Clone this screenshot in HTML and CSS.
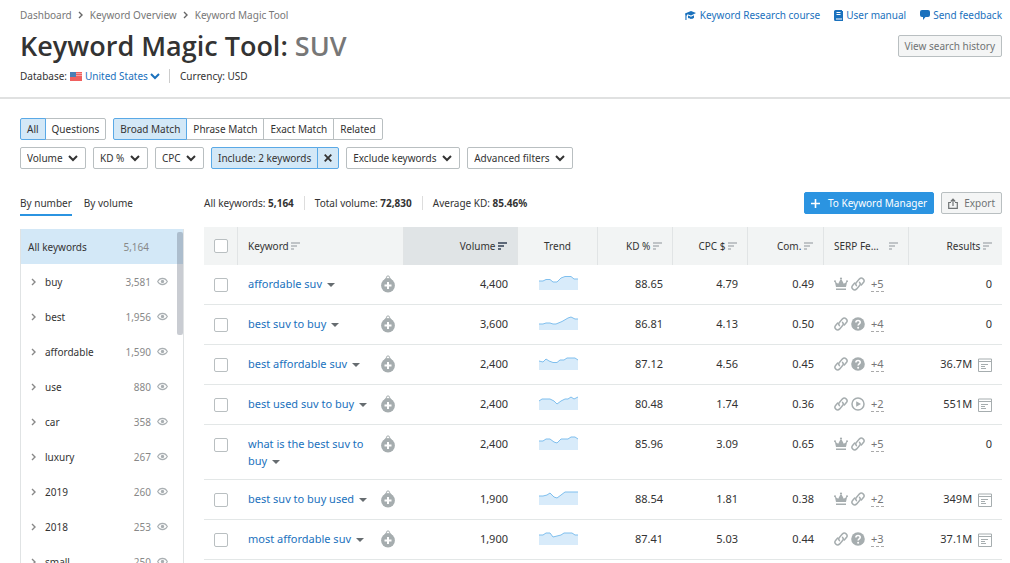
FILE: index.html
```html
<!DOCTYPE html>
<html lang="en">
<head>
    <meta charset="UTF-8">
    <meta name="viewport" content="width=device-width, initial-scale=1.0">
    <title>Keyword Magic Tool: SUV</title>
    <link rel="stylesheet" href="styles.css">
</head>
<body>
    <!-- Icons shared by the page -->
    <svg class="sprite" aria-hidden="true">
        <symbol id="sort" viewBox="0 0 9 8"><path d="M0 0h9v2H0zM0 3h6v2H0zM0 6h3v2H0z"/></symbol>
        <symbol id="chevron" viewBox="0 0 6 8"><path d="M1 1l3 3-3 3" fill="none" stroke="currentColor" stroke-width="1.4"/></symbol>
        <symbol id="eye" viewBox="0 0 10 8"><path d="M.6 4C2.6.2 7.4.2 9.4 4 7.4 7.8 2.6 7.8.6 4z" fill="none" stroke="currentColor"/><circle cx="5" cy="4" r="1.5"/></symbol>
        <symbol id="add" viewBox="0 0 14 18"><circle cx="7" cy="10.5" r="6.9"/><path d="M1.8 6.5L5 2.500h4l3.200 4z"/><circle cx="7" cy="2.400" r="1.500" fill="#fff" stroke="currentColor"/><path d="M7 7v7M3.500 10.500h7" stroke="#fff" stroke-width="2"/></symbol>
        <symbol id="crown" viewBox="0 0 14 14"><path d="M2 10L.8 4.500l3.400 2.200L6.400 2.500h1.200l2.200 4.200 3.400-2.200L12 10zM2 11.500h10V13H2z"/><circle cx="7" cy="1.500" r="1.100"/><circle cx="1" cy="4.300" r="1"/><circle cx="13" cy="4.300" r="1"/></symbol>
        <symbol id="link" viewBox="0 0 14 14"><g fill="none" stroke="currentColor" stroke-width="1.500" stroke-linecap="round"><path d="M5.400 8.600c-1-1.200-.8-2.300 0-3.200l2.900-3.300c2.500-2.500 6.300.6 4.100 3.500L10.300 8"/><path d="M8.600 5.400c1 1.200.8 2.300 0 3.200l-2.900 3.300c-2.500 2.500-6.300-.6-4.100-3.500L3.700 6"/></g></symbol>
        <symbol id="question" viewBox="0 0 14 14"><circle cx="7" cy="7" r="6.800"/><path d="M4.900 5.500c0-2.800 4.300-2.600 4.300-.2C9.200 6.900 7.100 6.800 7.100 8.600" fill="none" stroke="#fff" stroke-width="1.600"/><circle cx="7.100" cy="10.700" r="1" fill="#fff"/></symbol>
        <symbol id="play" viewBox="0 0 14 14"><circle cx="7" cy="7" r="6" fill="none" stroke="currentColor" stroke-width="1.500"/><path d="M5.200 4.200L10 7l-4.800 2.800z"/></symbol>
        <symbol id="serp" viewBox="0 0 14 14"><path d="M.5 1h13v12.500H.5zM.5 3.500h13M3 6.500h7M3 8.500h4M3 10.500h5" fill="none" stroke="currentColor"/></symbol>
    </svg>

    <header class="header">
        <div class="header-top">
            <nav class="breadcrumbs" aria-label="Breadcrumbs">
                <a href="#">Dashboard</a>
                <svg width="6" height="8"><use href="#chevron"/></svg>
                <a href="#">Keyword Overview</a>
                <svg width="6" height="8"><use href="#chevron"/></svg>
                <a href="#">Keyword Magic Tool</a>
            </nav>
            <nav class="help-links" aria-label="Help">
                <a href="#"><svg class="cap" width="11" height="10" viewBox="0 0 11 10"><path d="M0 3.500L6 1l5 2-5 2.500-3.500-1.300L1.500 6v4H.4V5.500z"/><path d="M3 5.500l3 1.200 3-1.500v2.500c-1.500 1.600-4.500 1.600-6 0z"/></svg>Keyword Research course</a>
                <a href="#"><svg width="9" height="11" viewBox="0 0 9 11"><path d="M1.500 0H8v8.500H2v1h6V1h1v10H1.500A1.500 1.500 0 0 1 0 9.500v-8A1.500 1.500 0 0 1 1.500 0z"/><path d="M2.500 2.500h4M2.500 4.500h4" stroke="#fff"/></svg>User manual</a>
                <a href="#"><svg width="10" height="10" viewBox="0 0 10 10"><path d="M2 0h6a2 2 0 0 1 2 2v3a2 2 0 0 1-2 2H5.500L3 10V7H2a2 2 0 0 1-2-2V2a2 2 0 0 1 2-2z"/></svg>Send feedback</a>
            </nav>
        </div>
        <div class="header-title">
            <h1>Keyword Magic Tool: <span>SUV</span></h1>
            <button type="button" class="btn">View search history</button>
        </div>
        <div class="header-info">
            <label for="database">Database:</label>
            <svg class="flag" width="12" height="9" viewBox="0 0 12 9"><path fill="#f0605f" d="M0 0h12v9H0z"/><path d="M6 1.500h6M6 3.500h6" stroke="#f7a3a0"/><path fill="#4b7fb5" d="M0 0h6v5H0z"/></svg>
            <select id="database" class="database">
                <option>United States</option>
            </select>
            <span class="currency">Currency: USD</span>
        </div>
    </header>

    <main class="main">
        <div class="filters">
            <div class="group">
                <button type="button" class="active">All</button>
                <button type="button">Questions</button>
            </div>
            <div class="group">
                <button type="button" class="active">Broad Match</button>
                <button type="button">Phrase Match</button>
                <button type="button">Exact Match</button>
                <button type="button">Related</button>
            </div>
        </div>
        <div class="filters">
            <select class="filter" aria-label="Volume"><option>Volume</option></select>
            <select class="filter" aria-label="Keyword difficulty"><option>KD %</option></select>
            <select class="filter" aria-label="CPC"><option>CPC</option></select>
            <div class="group">
                <button type="button" class="active">Include: 2 keywords</button>
                <button type="button" class="active clear" aria-label="Clear"><svg width="8" height="8" viewBox="0 0 8 8"><path d="M.7.7l6.600 6.600M7.300.7L.7 7.300" stroke="currentColor" stroke-width="1.800"/></svg></button>
            </div>
            <select class="filter" aria-label="Exclude keywords"><option>Exclude keywords</option></select>
            <select class="filter" aria-label="Advanced filters"><option>Advanced filters</option></select>
        </div>

        <div class="content">
            <!-- Keyword groups -->
            <aside class="sidebar">
                <div class="tabs">
                    <button type="button" class="selected">By number</button>
                    <button type="button">By volume</button>
                </div>
                <div class="groups">
                    <ul>
                        <li class="all"><span class="name">All keywords</span><span>5,164</span></li>
                        <li><svg width="6" height="8"><use href="#chevron"/></svg><span class="name">buy</span><span>3,581</span><svg class="eye" width="11" height="9"><use href="#eye"/></svg></li>
                        <li><svg width="6" height="8"><use href="#chevron"/></svg><span class="name">best</span><span>1,956</span><svg class="eye" width="11" height="9"><use href="#eye"/></svg></li>
                        <li><svg width="6" height="8"><use href="#chevron"/></svg><span class="name">affordable</span><span>1,590</span><svg class="eye" width="11" height="9"><use href="#eye"/></svg></li>
                        <li><svg width="6" height="8"><use href="#chevron"/></svg><span class="name">use</span><span>880</span><svg class="eye" width="11" height="9"><use href="#eye"/></svg></li>
                        <li><svg width="6" height="8"><use href="#chevron"/></svg><span class="name">car</span><span>358</span><svg class="eye" width="11" height="9"><use href="#eye"/></svg></li>
                        <li><svg width="6" height="8"><use href="#chevron"/></svg><span class="name">luxury</span><span>267</span><svg class="eye" width="11" height="9"><use href="#eye"/></svg></li>
                        <li><svg width="6" height="8"><use href="#chevron"/></svg><span class="name">2019</span><span>260</span><svg class="eye" width="11" height="9"><use href="#eye"/></svg></li>
                        <li><svg width="6" height="8"><use href="#chevron"/></svg><span class="name">2018</span><span>253</span><svg class="eye" width="11" height="9"><use href="#eye"/></svg></li>
                        <li><svg width="6" height="8"><use href="#chevron"/></svg><span class="name">small</span><span>250</span><svg class="eye" width="11" height="9"><use href="#eye"/></svg></li>
                    </ul>
                    <div class="scroll-thumb"></div>
                </div>
            </aside>

            <section class="results">
                <div class="toolbar">
                    <div class="stats">
                        <span>All keywords: <b>5,164</b></span>
                        <span>Total volume: <b>72,830</b></span>
                        <span>Average KD: <b>85.46%</b></span>
                    </div>
                    <button type="button" class="btn primary"><svg width="9" height="9" viewBox="0 0 9 9"><path d="M4.500 0v9M0 4.500h9" stroke="currentColor" stroke-width="1.600"/></svg>To Keyword Manager</button>
                    <button type="button" class="btn"><svg width="10" height="11" viewBox="0 0 10 11"><path d="M3 4.500H.7v5.800h8.600V4.500H7M5 8V1.500M2.800 3.500L5 1.200l2.200 2.300" fill="none" stroke="currentColor" stroke-width="1.200"/></svg>Export</button>
                </div>

                <table>
                    <colgroup>
                        <col class="col-check"><col class="col-keyword"><col class="col-add"><col class="col-volume"><col class="col-trend"><col class="col-number"><col class="col-number"><col class="col-com"><col class="col-serp"><col class="col-results">
                    </colgroup>
                    <thead>
                        <tr>
                            <th><input type="checkbox" aria-label="Select all"></th>
                            <th colspan="2" class="left">Keyword <svg width="9" height="8"><use href="#sort"/></svg></th>
                            <th class="sorted">Volume <svg width="9" height="8"><use href="#sort"/></svg></th>
                            <th class="center">Trend</th>
                            <th>KD % <svg width="9" height="8"><use href="#sort"/></svg></th>
                            <th>CPC $ <svg width="9" height="8"><use href="#sort"/></svg></th>
                            <th>Com. <svg width="9" height="8"><use href="#sort"/></svg></th>
                            <th class="serp-head"><div>SERP Fe… <svg width="9" height="8"><use href="#sort"/></svg></div></th>
                            <th>Results <svg width="9" height="8"><use href="#sort"/></svg></th>
                        </tr>
                    </thead>
                    <tbody>
                        <tr>
                            <td><input type="checkbox" aria-label="affordable suv"></td>
                            <td class="left"><a href="#">affordable suv</a> <i class="caret"></i></td>
                            <td class="add"><svg width="14" height="18"><use href="#add"/></svg></td>
                            <td>4,400</td>
                            <td class="trend"><svg width="39" height="14"><path class="area" d="M0 5h4l3-1.500h4L14 6h4l4-4 4-1.500h6L35 3h4v11H0z"/><path class="line" d="M0 5h4l3-1.500h4L14 6h4l4-4 4-1.500h6L35 3h4"/></svg></td>
                            <td>88.65</td>
                            <td>4.79</td>
                            <td>0.49</td>
                            <td class="serp"><div><svg width="14" height="14"><use href="#crown"/></svg><svg width="14" height="14"><use href="#link"/></svg><a href="#">+5</a></div></td>
                            <td>0</td>
                        </tr>
                        <tr>
                            <td><input type="checkbox" aria-label="best suv to buy"></td>
                            <td class="left"><a href="#">best suv to buy</a> <i class="caret"></i></td>
                            <td class="add"><svg width="14" height="18"><use href="#add"/></svg></td>
                            <td>3,600</td>
                            <td class="trend"><svg width="39" height="14"><path class="area" d="M0 8h4l3-1h4l3 1h3l6-2.500L29 2l3-1 4 2h3v11H0z"/><path class="line" d="M0 8h4l3-1h4l3 1h3l6-2.500L29 2l3-1 4 2h3"/></svg></td>
                            <td>86.81</td>
                            <td>4.13</td>
                            <td>0.50</td>
                            <td class="serp"><div><svg width="14" height="14"><use href="#link"/></svg><svg width="14" height="14"><use href="#question"/></svg><a href="#">+4</a></div></td>
                            <td>0</td>
                        </tr>
                        <tr>
                            <td><input type="checkbox" aria-label="best affordable suv"></td>
                            <td class="left"><a href="#">best affordable suv</a> <i class="caret"></i></td>
                            <td class="add"><svg width="14" height="18"><use href="#add"/></svg></td>
                            <td>2,400</td>
                            <td class="trend"><svg width="39" height="14"><path class="area" d="M0 5l4 1 3-3 3 2 4 1.500h4L21 4h4l3-2h8l3 2v10H0z"/><path class="line" d="M0 5l4 1 3-3 3 2 4 1.500h4L21 4h4l3-2h8l3 2"/></svg></td>
                            <td>87.12</td>
                            <td>4.56</td>
                            <td>0.45</td>
                            <td class="serp"><div><svg width="14" height="14"><use href="#link"/></svg><svg width="14" height="14"><use href="#question"/></svg><a href="#">+4</a></div></td>
                            <td>36.7M <svg class="page" width="14" height="14"><use href="#serp"/></svg></td>
                        </tr>
                        <tr>
                            <td><input type="checkbox" aria-label="best used suv to buy"></td>
                            <td class="left"><a href="#">best used suv to buy</a> <i class="caret"></i></td>
                            <td class="add"><svg width="14" height="18"><use href="#add"/></svg></td>
                            <td>2,400</td>
                            <td class="trend"><svg width="39" height="14"><path class="area" d="M0 5l3-2h8l4 2 3 3 4-3 4-2h3l3-2 3 2 4-2v13H0z"/><path class="line" d="M0 5l3-2h8l4 2 3 3 4-3 4-2h3l3-2 3 2 4-2"/></svg></td>
                            <td>80.48</td>
                            <td>1.74</td>
                            <td>0.36</td>
                            <td class="serp"><div><svg width="14" height="14"><use href="#link"/></svg><svg width="14" height="14"><use href="#play"/></svg><a href="#">+2</a></div></td>
                            <td>551M <svg class="page" width="14" height="14"><use href="#serp"/></svg></td>
                        </tr>
                        <tr>
                            <td><input type="checkbox" aria-label="what is the best suv to buy"></td>
                            <td class="left"><a href="#">what is the best suv to buy</a> <i class="caret"></i></td>
                            <td class="add"><svg width="14" height="18"><use href="#add"/></svg></td>
                            <td>2,400</td>
                            <td class="trend"><svg width="39" height="14"><path class="area" d="M0 5h4l3-2h4l4 3 3 1 4-4h7l3-2h4l3 2v11H0z"/><path class="line" d="M0 5h4l3-2h4l4 3 3 1 4-4h7l3-2h4l3 2"/></svg></td>
                            <td>85.96</td>
                            <td>3.09</td>
                            <td>0.65</td>
                            <td class="serp"><div><svg width="14" height="14"><use href="#crown"/></svg><svg width="14" height="14"><use href="#link"/></svg><a href="#">+5</a></div></td>
                            <td>0</td>
                        </tr>
                        <tr>
                            <td><input type="checkbox" aria-label="best suv to buy used"></td>
                            <td class="left"><a href="#">best suv to buy used</a> <i class="caret"></i></td>
                            <td class="add"><svg width="14" height="18"><use href="#add"/></svg></td>
                            <td>1,900</td>
                            <td class="trend"><svg width="39" height="14"><path class="area" d="M0 5h4l4-1 3-2 4 4 3 1 4-3 4-3h13v13H0z"/><path class="line" d="M0 5h4l4-1 3-2 4 4 3 1 4-3 4-3h13"/></svg></td>
                            <td>88.54</td>
                            <td>1.81</td>
                            <td>0.38</td>
                            <td class="serp"><div><svg width="14" height="14"><use href="#crown"/></svg><svg width="14" height="14"><use href="#link"/></svg><a href="#">+2</a></div></td>
                            <td>349M <svg class="page" width="14" height="14"><use href="#serp"/></svg></td>
                        </tr>
                        <tr>
                            <td><input type="checkbox" aria-label="most affordable suv"></td>
                            <td class="left"><a href="#">most affordable suv</a> <i class="caret"></i></td>
                            <td class="add"><svg width="14" height="18"><use href="#add"/></svg></td>
                            <td>1,900</td>
                            <td class="trend"><svg width="39" height="14"><path class="area" d="M0 4h4l3-2h4l3 4 4-1 4-1 3-2h8l3 2h3v10H0z"/><path class="line" d="M0 4h4l3-2h4l3 4 4-1 4-1 3-2h8l3 2h3"/></svg></td>
                            <td>87.41</td>
                            <td>5.03</td>
                            <td>0.44</td>
                            <td class="serp"><div><svg width="14" height="14"><use href="#link"/></svg><svg width="14" height="14"><use href="#question"/></svg><a href="#">+3</a></div></td>
                            <td>37.1M <svg class="page" width="14" height="14"><use href="#serp"/></svg></td>
                        </tr>
                    </tbody>
                </table>
            </section>
        </div>
    </main>
</body>
</html>
```
FILE: styles.css
```css
* {
    box-sizing: border-box;
}

body {
    height: 100vh;
    margin: 0;
    overflow: hidden;
    background-color: #fff;
    color: #333;
    font-family: "Noto Sans", sans-serif;
    font-size: 10px;
    line-height: 14px;
}

a {
    color: #1a71bd;
    text-decoration: none;
}

button,
select {
    margin: 0;
    font: inherit;
    color: inherit;
    cursor: pointer;
}

svg {
    fill: currentColor;
    flex: none;
}

.sprite {
    position: absolute;
    width: 0;
    height: 0;
}

/* Header */
.header {
    padding: 8px 8px 14px 20px;
    border-bottom: 2px solid #e0e1e1;
}

.header-top,
.header-title {
    display: flex;
    justify-content: space-between;
    align-items: center;
}

.breadcrumbs {
    display: flex;
    align-items: center;
    gap: 6px;
    color: #666;
}

.breadcrumbs a {
    color: #777;
}

.help-links {
    display: flex;
    gap: 14px;
}

.help-links a {
    display: flex;
    align-items: center;
    gap: 3px;
}

.help-links .cap {
    margin-right: 1px;
}

.header-title {
    margin-top: 4px;
}

h1 {
    margin: 0;
    font-family: "Open Sans", "Noto Sans", sans-serif;
    font-size: 27px;
    font-weight: 600;
    line-height: 40px;
}

h1 span {
    color: #777;
}

.btn {
    display: flex;
    align-items: center;
    gap: 6px;
    height: 22px;
    padding: 0 6px;
    border: 1px solid #b9bfc1;
    border-radius: 2px;
    background-color: #f4f5f5;
    color: #6f7374;
}

.primary {
    gap: 8px;
    border-color: #2b94e1;
    background-color: #2b94e1;
    color: #fff;
}

.header-info {
    display: flex;
    align-items: center;
    margin-top: 3px;
}

.flag {
    margin: 0 3px;
}

.database {
    appearance: none;
    padding: 0 12px 0 0;
    border: none;
    background: url("data:image/svg+xml,%3Csvg xmlns='http://www.w3.org/2000/svg' width='10' height='7'%3E%3Cpath d='M1 1l4 4 4-4' fill='none' stroke='%231a71bd' stroke-width='2'/%3E%3C/svg%3E") no-repeat right center;
    color: #1a71bd;
}

.currency {
    margin-left: 9px;
    padding-left: 10px;
    border-left: 1px solid #ccc;
}

/* Filters */
.main {
    padding: 19px 8px 0 20px;
}

.filters {
    display: flex;
    gap: 7px;
    margin-bottom: 7px;
}

.group {
    display: flex;
}

.group button {
    height: 22px;
    padding: 0 6px;
    border: 1px solid #b9bfc1;
    margin-left: -1px;
    background-color: #fff;
}

.group button:first-child {
    margin-left: 0;
    border-radius: 2px 0 0 2px;
}

.group button:last-child {
    border-radius: 0 2px 2px 0;
}

.group .active {
    position: relative;
    border-color: #5aa9e6;
    background-color: #d3e8f7;
}

.group .clear {
    display: flex;
    align-items: center;
}

.filter {
    appearance: none;
    height: 22px;
    padding: 0 22px 0 6px;
    border: 1px solid #b9bfc1;
    border-radius: 2px;
    background: #fff url("data:image/svg+xml,%3Csvg xmlns='http://www.w3.org/2000/svg' width='10' height='7'%3E%3Cpath d='M1 1l4 4 4-4' fill='none' stroke='%23333' stroke-width='2'/%3E%3C/svg%3E") no-repeat right 7px center;
}

.content {
    display: flex;
    gap: 20px;
    margin-top: 23px;
}

/* Sidebar */
.sidebar {
    flex: none;
    width: 164px;
}

.tabs {
    display: flex;
    gap: 12px;
    margin-bottom: 13px;
}

.tabs button {
    height: 24px;
    padding: 0;
    border: none;
    border-bottom: 2px solid transparent;
    background: none;
}

.tabs .selected {
    border-color: #2b94e1;
}

.groups {
    position: relative;
    border: 1px solid #e0e3e4;
    border-top: none;
}

.groups ul {
    margin: 0;
    padding: 0;
    list-style: none;
}

.groups li {
    display: flex;
    align-items: center;
    height: 35px;
    padding: 0 15px 0 10px;
    color: #888;
}

.groups .name {
    flex: 1;
    margin-left: 8px;
    color: #333;
}

.groups .all {
    padding: 0 34px 0 7px;
    background-color: #d3e8f7;
}

.groups .all .name {
    margin-left: 0;
}

.groups .eye {
    margin-left: 6px;
    color: #a9afb2;
}

.scroll-thumb {
    position: absolute;
    top: 3px;
    right: 0;
    width: 6px;
    height: 103px;
    border-radius: 2px;
    background-color: rgba(100, 110, 125, 0.35);
}

/* Results */
.results {
    flex: 1;
    min-width: 0;
}

.toolbar {
    display: flex;
    align-items: center;
    gap: 7px;
    margin-bottom: 13px;
}

.stats {
    display: flex;
    flex: 1;
}

.stats span + span {
    margin-left: 10px;
    padding-left: 10px;
    border-left: 1px solid #ddd;
}

table {
    width: 100%;
    table-layout: fixed;
    border-collapse: separate;
    border-spacing: 0;
}

.col-check {
    width: 34px;
}

.col-add {
    width: 33px;
}

.col-volume {
    width: 114px;
}

.col-trend {
    width: 80px;
}

.col-number {
    width: 75px;
}

.col-com {
    width: 76px;
}

.col-serp {
    width: 85px;
}

.col-results {
    width: 93px;
}

th {
    height: 38px;
    padding: 0 10px;
    border-right: 1px solid #e1e4e5;
    background-color: #f2f4f4;
    font-weight: normal;
    text-align: right;
    white-space: nowrap;
}

th:last-child {
    border-right: none;
}

th svg {
    color: #c0c4c7;
}

.sorted {
    background-color: #e0e4e6;
}

.sorted svg {
    color: #5d6878;
}

td {
    height: 40px;
    padding: 10px;
    border-bottom: 1px solid #e3e7e7;
    font-size: 11px;
    line-height: 17px;
    text-align: right;
    vertical-align: top;
}

.left {
    padding-right: 0;
    text-align: left;
}

.center {
    text-align: center;
}

.trend {
    padding-top: 11px;
}

.trend svg {
    margin: 0 auto;
}

.add {
    padding: 10px 9px 0 10px;
}

.serp-head div {
    display: flex;
    align-items: center;
    justify-content: space-between;
}

input[type="checkbox"] {
    display: block;
    appearance: none;
    width: 14px;
    height: 14px;
    margin: 0;
    border: 1px solid #b9bfc1;
    border-radius: 2px;
    background-color: #fff;
}

td input[type="checkbox"] {
    margin-top: 3px;
}

td svg {
    display: block;
    color: #a6adaf;
}

.caret {
    display: inline-block;
    margin-left: 2px;
    border: 4px solid transparent;
    border-top-color: #666c70;
    border-bottom: none;
    vertical-align: 1px;
}

.area {
    fill: #d8ebfa;
}

.line {
    fill: none;
    stroke: #7fbfee;
}

.serp div {
    display: flex;
    align-items: center;
    gap: 3px;
    height: 18px;
}

.serp a {
    margin-left: 3px;
    border-bottom: 1px dashed #aaa;
    color: #777;
    line-height: 14px;
}

td .page {
    display: inline-block;
    margin-left: 3px;
    vertical-align: -4px;
}
```
